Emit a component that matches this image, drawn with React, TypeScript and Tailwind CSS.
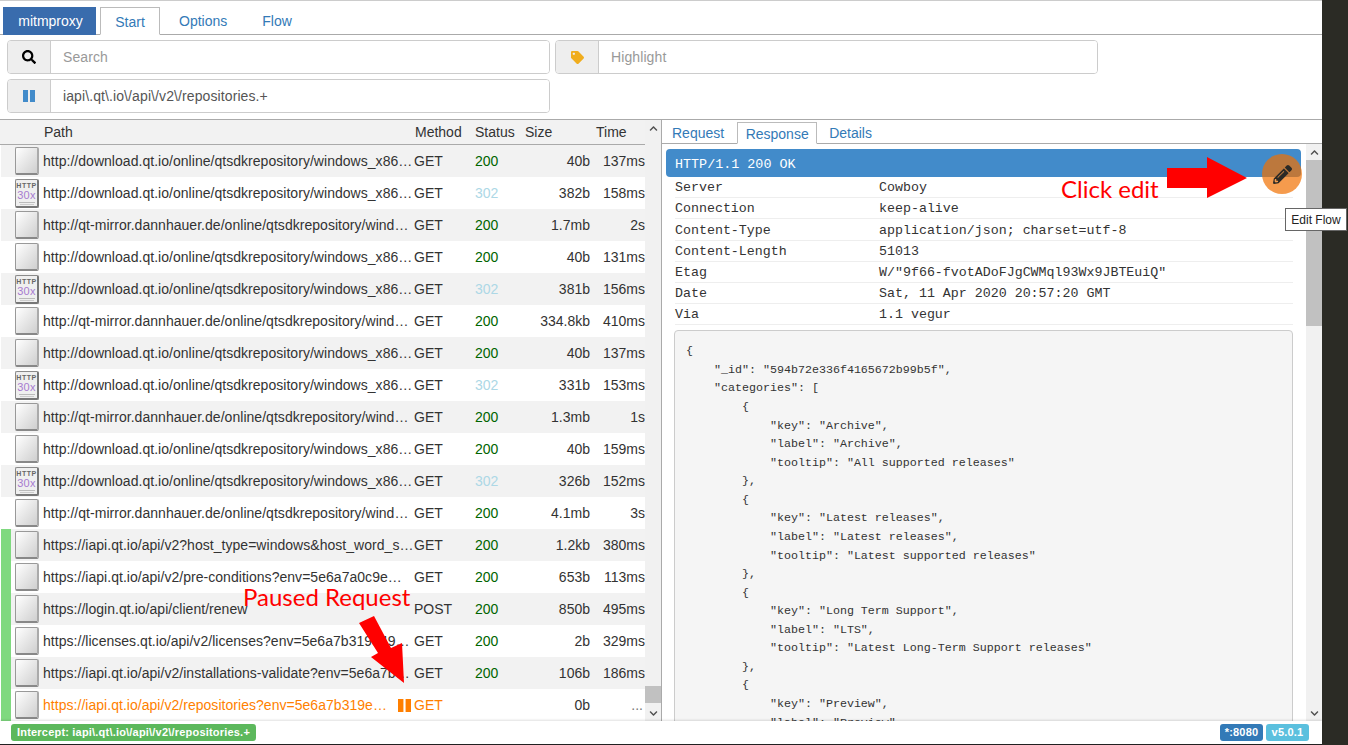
import React from "react";
import { FaSearch, FaTag, FaPencilAlt, FaChevronUp, FaChevronDown } from "react-icons/fa";

const QT = "http://download.qt.io/online/qtsdkrepository/windows_x86…";
const MIRROR = "http://qt-mirror.dannhauer.de/online/qtsdkrepository/wind…";

type Flow = {
  url: string;
  method: string;
  status?: number;
  size: string;
  time: string;
  intercepted?: boolean;
  paused?: boolean;
};

const flows: Flow[] = [
  { url: QT, method: "GET", status: 200, size: "40b", time: "137ms" },
  { url: QT, method: "GET", status: 302, size: "382b", time: "158ms" },
  { url: MIRROR, method: "GET", status: 200, size: "1.7mb", time: "2s" },
  { url: QT, method: "GET", status: 200, size: "40b", time: "131ms" },
  { url: QT, method: "GET", status: 302, size: "381b", time: "156ms" },
  { url: MIRROR, method: "GET", status: 200, size: "334.8kb", time: "410ms" },
  { url: QT, method: "GET", status: 200, size: "40b", time: "137ms" },
  { url: QT, method: "GET", status: 302, size: "331b", time: "153ms" },
  { url: MIRROR, method: "GET", status: 200, size: "1.3mb", time: "1s" },
  { url: QT, method: "GET", status: 200, size: "40b", time: "159ms" },
  { url: QT, method: "GET", status: 302, size: "326b", time: "152ms" },
  { url: MIRROR, method: "GET", status: 200, size: "4.1mb", time: "3s" },
  { url: "https://iapi.qt.io/api/v2?host_type=windows&host_word_s…", method: "GET", status: 200, size: "1.2kb", time: "380ms", intercepted: true },
  { url: "https://iapi.qt.io/api/v2/pre-conditions?env=5e6a7a0c9e…", method: "GET", status: 200, size: "653b", time: "113ms", intercepted: true },
  { url: "https://login.qt.io/api/client/renew", method: "POST", status: 200, size: "850b", time: "495ms", intercepted: true },
  { url: "https://licenses.qt.io/api/v2/licenses?env=5e6a7b319e49…", method: "GET", status: 200, size: "2b", time: "329ms", intercepted: true },
  { url: "https://iapi.qt.io/api/v2/installations-validate?env=5e6a7b…", method: "GET", status: 200, size: "106b", time: "186ms", intercepted: true },
  { url: "https://iapi.qt.io/api/v2/repositories?env=5e6a7b319e…", method: "GET", size: "0b", time: "...", intercepted: true, paused: true },
];

const headers = [
  ["Server", "Cowboy"],
  ["Connection", "keep-alive"],
  ["Content-Type", "application/json; charset=utf-8"],
  ["Content-Length", "51013"],
  ["Etag", 'W/"9f66-fvotADoFJgCWMql93Wx9JBTEuiQ"'],
  ["Date", "Sat, 11 Apr 2020 20:57:20 GMT"],
  ["Via", "1.1 vegur"],
];

const json = `{
    "_id": "594b72e336f4165672b99b5f",
    "categories": [
        {
            "key": "Archive",
            "label": "Archive",
            "tooltip": "All supported releases"
        },
        {
            "key": "Latest releases",
            "label": "Latest releases",
            "tooltip": "Latest supported releases"
        },
        {
            "key": "Long Term Support",
            "label": "LTS",
            "tooltip": "Latest Long-Term Support releases"
        },
        {
            "key": "Preview",
            "label": "Preview",`;

const PauseIcon = ({ className }: { className: string }) => (
  <svg viewBox="0 0 12 12" className={className} fill="currentColor" preserveAspectRatio="none">
    <rect x="0" y="0" width="5" height="12" />
    <rect x="7" y="0" width="5" height="12" />
  </svg>
);

const FlowIcon = ({ redirect }: { redirect: boolean }) =>
  redirect ? (
    <div className="w-[24px] h-[29px] shrink-0 rounded-[2px] border border-[#8a8a8a] border-b-2 border-b-[#777] border-r-2 border-r-[#777] bg-[#efefef] flex flex-col items-center overflow-hidden leading-none">
      <span className="text-[7px] font-bold tracking-[0.5px] text-[#666] mt-[1px] leading-[9px]">HTTP</span>
      <span className="text-[11px] tracking-[0.3px] text-[#a77bd0] leading-[10px]">30x</span>
      <span className="w-[16px] h-px bg-[#bbb] mt-[2px]" />
      <span className="w-[14px] h-px bg-[#ccc] mt-px" />
    </div>
  ) : (
    <div className="w-[24px] h-[28px] shrink-0 rounded-[2px] border border-[#999] border-b-2 border-b-[#888] border-r-2 border-r-[#aaa] bg-gradient-to-br from-white to-[#cfcfcf]" />
  );

const FlowRow = ({ flow, index }: { flow: Flow; index: number }) => (
  <div className={`flex items-center h-[32px] text-[14px] text-[#333] ${index % 2 === 0 ? "bg-[#f2f2f2]" : "bg-white"}`}>
    <div className={`w-[11px] h-full shrink-0 border-l border-l-white ${flow.intercepted ? "bg-[#7fd97f]" : ""}`} />
    <div className="w-[32px] shrink-0 pl-[4px]">
      <FlowIcon redirect={flow.status === 302} />
    </div>
    <div className="w-[371px] shrink-0 flex items-center">
      <span className={`flex-1 whitespace-nowrap tracking-[0.035px] ${flow.paused ? "text-[#ff7f00]" : ""}`}>{flow.url}</span>
      {flow.paused && <PauseIcon className="w-[13px] h-[13px] mr-[3px] shrink-0 text-[#ff7f00]" />}
    </div>
    <div className={`w-[61px] shrink-0 ${flow.paused ? "text-[#ff7f00]" : ""}`}>{flow.method}</div>
    <div className={`w-[50px] shrink-0 ${flow.status === 302 ? "text-[#add8e6]" : "text-[#006400]"}`}>{flow.status}</div>
    <div className="w-[65px] shrink-0 text-right">{flow.size}</div>
    <div className={`w-[55px] shrink-0 text-right whitespace-nowrap ${flow.paused ? "text-[#777] pr-[2px]" : ""}`}>{flow.time}</div>
  </div>
);

const Scrollbar = ({ before, thumb }: { before: string; thumb: string }) => (
  <div className="w-[16px] shrink-0 bg-[#f1f1f1] flex flex-col items-center">
    <div className="h-[16px] shrink-0 flex items-center justify-center text-[#505050]">
      <FaChevronUp className="w-[9px] h-[9px]" />
    </div>
    <div className={`${before} shrink-0`} />
    <div className={`${thumb} w-full shrink-0 bg-[#c1c1c1]`} />
    <div className="flex-1" />
    <div className="h-[16px] shrink-0 flex items-center justify-center text-[#505050]">
      <FaChevronDown className="w-[9px] h-[9px]" />
    </div>
  </div>
);

const InputGroup = ({ icon, value, placeholder }: { icon: React.ReactNode; value?: string; placeholder?: string }) => (
  <div className="w-[543px] h-[34px] flex rounded-[4px] border border-[#ccc] overflow-hidden text-[14px]">
    <div className="w-[43px] shrink-0 bg-[#eee] border-r border-[#ccc] flex items-center justify-center">{icon}</div>
    <div className={`flex-1 px-[12px] flex items-center bg-white tracking-[0.1px] ${value ? "text-[#555]" : "text-[#999]"}`}>{value ?? placeholder}</div>
  </div>
);

export default function App() {
  return (
    <div className="relative w-[1348px] h-[745px] overflow-hidden flex bg-[#2b2b25] font-['Liberation_Sans',Arial,sans-serif]">
      <div className="w-[1322px] h-[745px] flex flex-col bg-white border-t border-b border-t-[#ccc] border-b-[#222]">
        {/* Top tabs */}
        <nav className="h-[34px] shrink-0 flex items-end pl-[3px] border-b border-[#aaa] text-[14px]">
          <div className="w-[93px] h-[28px] -mb-px pt-[1px] pl-[2px] bg-[#396cad] text-white flex items-center justify-center">mitmproxy</div>
          <div className="w-[60px] h-[28px] -mb-px pt-[2px] ml-[4px] bg-white border border-[#bbb] border-b-white text-[#337ab7] flex items-center justify-center">Start</div>
          <div className="h-[28px] pt-[2px] ml-[19px] text-[#337ab7] flex items-center">Options</div>
          <div className="h-[28px] pt-[2px] ml-[35px] text-[#337ab7] flex items-center">Flow</div>
        </nav>

        {/* Filters */}
        <div className="h-[85px] shrink-0 border-b border-[#aaa] pl-[7px] pt-[5px] flex flex-col gap-[5px]">
          <div className="flex gap-[5px]">
            <InputGroup icon={<FaSearch className="w-[14px] h-[14px] text-black" />} placeholder="Search" />
            <InputGroup icon={<FaTag className="w-[13px] h-[13px] text-[#f0ad1e]" />} placeholder="Highlight" />
          </div>
          <InputGroup icon={<PauseIcon className="w-[12px] h-[12px] text-[#428bca]" />} value="iapi\.qt\.io\/api\/v2\/repositories.+" />
        </div>

        {/* Flow table and details */}
        <div className="flex-1 min-h-0 flex">
          <div className="w-[645px] shrink-0 flex flex-col overflow-hidden">
            <div className="h-[25px] shrink-0 flex items-center bg-[#f2f2f2] border-b border-[#aaa] text-[14px] text-[#333]">
              <div className="w-[44px] shrink-0" />
              <div className="w-[371px] shrink-0">Path</div>
              <div className="w-[60px] shrink-0">Method</div>
              <div className="w-[50px] shrink-0">Status</div>
              <div className="w-[71px] shrink-0">Size</div>
              <div className="shrink-0">Time</div>
            </div>
            {flows.map((flow, i) => (
              <FlowRow key={i} flow={flow} index={i} />
            ))}
          </div>
          <Scrollbar before="h-[550px]" thumb="h-[17px]" />

          <div className="flex-1 min-w-0 border-l border-[#aaa] flex flex-col">
            <div className="h-[24px] shrink-0 flex items-end pl-[3px] border-b border-[#aaa] text-[14px] text-[#337ab7]">
              <div className="h-[21px] pt-[2px] pl-[7px] pr-[9px] flex items-center">Request</div>
              <div className="h-[22px] w-[80px] -mb-px pt-[2px] ml-[4px] bg-white border border-[#bbb] border-b-white flex items-center justify-center">Response</div>
              <div className="h-[21px] pt-[2px] ml-[12px] flex items-center">Details</div>
            </div>
            <div className="flex-1 min-h-0 flex">
              <div className="flex-1 min-w-0 overflow-hidden pl-[4px] pr-[5px] pt-[5px] font-['Liberation_Mono',monospace] text-[#333]">
                <div className="h-[28px] pt-[4px] rounded-[4px] bg-[#428bca] text-white text-[13.4px] pl-[9px] flex items-center">HTTP/1.1 200 OK</div>
                <div className="mx-[9px] mr-[8px] text-[13.3px]">
                  {headers.map(([name, value]) => (
                    <div key={name} className="h-[21.2px] pt-[2px] flex items-center border-b border-[#eee]">
                      <div className="w-[204px] shrink-0">{name}</div>
                      <div>{value}</div>
                    </div>
                  ))}
                </div>
                <pre className="mt-[5px] mx-[8px] h-[600px] rounded-[4px] border border-[#ccc] bg-[#f5f5f5] pl-[11px] pt-[11px] text-[11.67px] leading-[18.57px] text-[#333] font-['Liberation_Mono',monospace]">{json}</pre>
              </div>
              <Scrollbar before="h-0" thumb="h-[166px]" />
            </div>
          </div>
        </div>

        {/* Footer */}
        <footer className="relative h-[23px] shrink-0 flex items-center justify-between pl-[11px] pr-[13px] bg-white shadow-[0_-1px_2px_rgba(0,0,0,0.12)] text-white text-[11px] font-bold tracking-[0.2px]">
          <span className="h-[17px] w-[245px] rounded-[3px] bg-[#5cb85c] flex items-center justify-center whitespace-nowrap">Intercept: iapi\.qt\.io\/api\/v2\/repositories.+</span>
          <div className="flex gap-[3px]">
            <span className="h-[17px] w-[43px] rounded-[3px] bg-[#337ab7] flex items-center justify-center">*:8080</span>
            <span className="h-[17px] w-[43px] rounded-[3px] bg-[#5bc0de] flex items-center justify-center">v5.0.1</span>
          </div>
        </footer>
      </div>

      {/* Annotations painted over the screenshot */}
      <div className="absolute left-[1262px] top-[154px] w-[40px] h-[40px] rounded-full bg-[#f17102]/70 flex items-center justify-center text-[#2b2a26]">
        <FaPencilAlt className="w-[19px] h-[19px]" />
      </div>
      <div className="absolute left-[1285px] top-[208px] w-[62px] h-[23px] bg-white border border-[#666] text-[12px] text-[#222] flex items-center justify-center whitespace-nowrap">Edit Flow</div>
      <span className="absolute left-[1061px] top-[172px] text-[24px] leading-[34px] text-[#ff0000] font-['Lato',sans-serif] whitespace-nowrap">Click edit</span>
      <span className="absolute left-[243px] top-[580px] text-[24px] leading-[34px] text-[#ff0000] font-['Lato',sans-serif] whitespace-nowrap">Paused Request</span>
      <svg className="absolute left-[1160px] top-[150px] w-[100px] h-[56px]" viewBox="0 0 100 56">
        <polygon points="7,18 47,18 47,7 87,28 47,48 47,38 7,38" fill="#ff0000" />
      </svg>
      <svg className="absolute left-[350px] top-[610px] w-[64px] h-[80px]" viewBox="0 0 64 80">
        <polygon points="9,13 24,6 41,38 52,33 54,73 21,47 28,43" fill="#ff0000" />
      </svg>
    </div>
  );
}
